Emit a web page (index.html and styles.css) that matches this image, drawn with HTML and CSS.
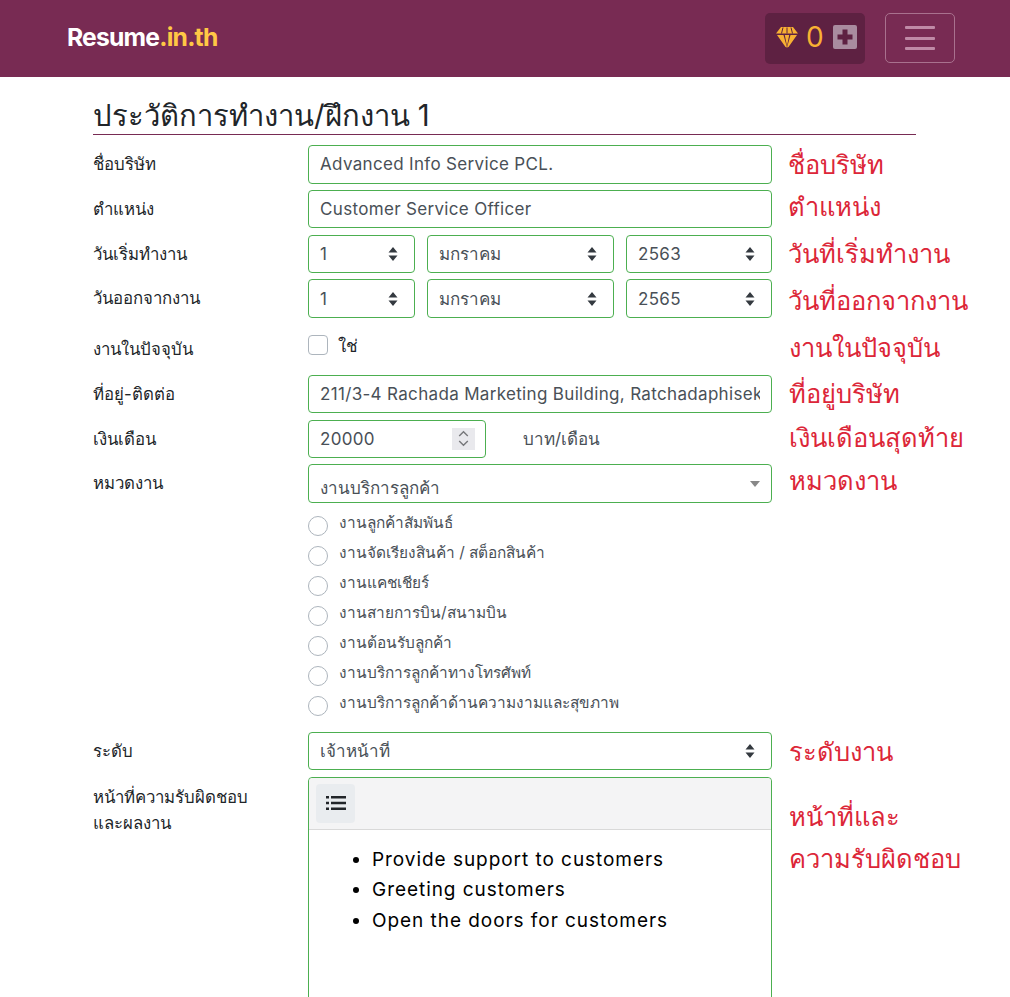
FILE: index.html
```html
<!DOCTYPE html>
<html>
<head>
  <meta name="viewport" content="width=device-width, initial-scale=1">
  <link rel="stylesheet" href="styles.css">
</head>
<body>
  <nav class="navbar">
    <a class="brand">Resume<span class="brand-in">.in.th</span></a>
    <div class="nav-right">
      <div class="coins">
        <svg class="gem" viewBox="0 0 24 22" width="24" height="22">
          <path fill="#f8b133" d="M6 1h12l5 6.500H1z"/>
          <path fill="#f8b133" d="M2 9h6.500L12 21.500 10.500 21zM9.800 9h4.400L12 20zM15.500 9H22L13.500 21 12 21.500z"/>
          <path stroke="#5e2142" stroke-width="1" fill="none" d="M8 1.500 6.500 7.500M16 1.500l1.500 6M12 1.500v6"/>
        </svg>
        <span class="coin-count">0</span>
        <span class="coin-plus">
          <svg viewBox="0 0 24 24" width="24" height="24"><path fill="#5e2142" d="M9.500 4.500h5v5h5v5h-5v5h-5v-5h-5v-5h5z"/></svg>
        </span>
      </div>
      <button class="toggler" type="button">
        <span class="bar"></span><span class="bar"></span><span class="bar"></span>
      </button>
    </div>
  </nav>

  <main class="container">
    <h3 class="section-title">ประวัติการทำงาน/ฝึกงาน 1</h3>

    <div class="row">
      <label class="lbl">ชื่อบริษัท</label>
      <div class="field"><input class="ctl latin" type="text" value="Advanced Info Service PCL."></div>
      <div class="note nudge-3">ชื่อบริษัท</div>
    </div>
    <div class="row">
      <label class="lbl">ตำแหน่ง</label>
      <div class="field"><input class="ctl latin" type="text" value="Customer Service Officer"></div>
      <div class="note nudge-0">ตำแหน่ง</div>
    </div>
    <div class="row">
      <label class="lbl">วันเริ่มทำงาน</label>
      <div class="field dates">
        <select class="ctl sel latin"><option>1</option></select>
        <select class="ctl sel"><option>มกราคม</option></select>
        <select class="ctl sel latin"><option>2563</option></select>
      </div>
      <div class="note nudge-2">วันที่เริ่มทำงาน</div>
    </div>
    <div class="row">
      <label class="lbl">วันออกจากงาน</label>
      <div class="field dates">
        <select class="ctl sel latin"><option>1</option></select>
        <select class="ctl sel"><option>มกราคม</option></select>
        <select class="ctl sel latin"><option>2565</option></select>
      </div>
      <div class="note nudge-5">วันที่ออกจากงาน</div>
    </div>
    <div class="row row-check">
      <label class="lbl">งานในปัจจุบัน</label>
      <div class="field check-line"><input class="check" type="checkbox"><span>ใช่</span></div>
      <div class="note note-in note-raised">งานในปัจจุบัน</div>
    </div>
    <div class="row">
      <label class="lbl">ที่อยู่-ติดต่อ</label>
      <div class="field"><input class="ctl latin" type="text" value="211/3-4 Rachada Marketing Building, Ratchadaphisek Road"></div>
      <div class="note nudge-2 note-in">ที่อยู่บริษัท</div>
    </div>
    <div class="row">
      <label class="lbl">เงินเดือน</label>
      <div class="field salary">
        <div class="ctl num-box latin">
          <input class="num" type="text" value="20000">
          <span class="spin">
            <svg viewBox="0 0 11 17" width="11" height="17"><path fill="none" stroke="#77787b" stroke-width="1.400" d="M1.200 6 5.500 1.800 9.800 6M1.200 11l4.300 4.200L9.800 11"/></svg>
          </span>
        </div>
        <span class="unit">บาท/เดือน</span>
      </div>
      <div class="note nudge-1 note-in">เงินเดือนสุดท้าย</div>
    </div>
    <div class="row">
      <label class="lbl">หมวดงาน</label>
      <div class="field">
        <div class="ctl combo"><span class="combo-text">งานบริการลูกค้า</span><i class="caret"></i></div>
        <ul class="radios">
          <li><span class="radio"></span>งานลูกค้าสัมพันธ์</li>
          <li><span class="radio"></span>งานจัดเรียงสินค้า / สต็อกสินค้า</li>
          <li><span class="radio"></span>งานแคชเชียร์</li>
          <li><span class="radio"></span>งานสายการบิน/สนามบิน</li>
          <li><span class="radio"></span>งานต้อนรับลูกค้า</li>
          <li><span class="radio"></span>งานบริการลูกค้าทางโทรศัพท์</li>
          <li><span class="radio"></span>งานบริการลูกค้าด้านความงามและสุขภาพ</li>
        </ul>
      </div>
      <div class="note nudge-0 note-in">หมวดงาน</div>
    </div>
    <div class="row">
      <label class="lbl">ระดับ</label>
      <div class="field"><select class="ctl sel"><option>เจ้าหน้าที่</option></select></div>
      <div class="note nudge-3 note-in">ระดับงาน</div>
    </div>
    <div class="row row-editor">
      <label class="lbl">หน้าที่ความรับผิดชอบ<br>และผลงาน</label>
      <div class="field">
        <div class="editor">
          <div class="toolbar">
            <span class="tool">
              <svg viewBox="0 0 20 16" width="20" height="16"><path fill="#212529" d="M0 1h3v2.500H0zM5 1h15v2.500H5zM0 6.700h3v2.600H0zM5 6.700h15v2.600H5zM0 12.500h3V15H0zM5 12.500h15V15H5z"/></svg>
            </span>
          </div>
          <ul class="editor-body">
            <li>Provide support to customers</li>
            <li>Greeting customers</li>
            <li>Open the doors for customers</li>
          </ul>
        </div>
      </div>
      <div class="note note-editor note-in">หน้าที่และ<br>ความรับผิดชอบ</div>
    </div>
  </main>
</body>
</html>
```

FILE: styles.css
```css
* { box-sizing: border-box; }

html, body { height: 997px; overflow: hidden; }

body {
  margin: 0;
  font-family: "Inter", "Noto Sans", sans-serif;
  font-size: 17px;
  color: #212529;
  background: #fff;
}

.navbar {
  height: 77px;
  background: #782b53;
  display: flex;
  justify-content: space-between;
  padding: 13px 55px 0 67px;
}

.brand {
  margin-top: 9px;
  font-size: 24.700px;
  line-height: 30px;
  font-weight: 700;
  letter-spacing: -0.8px;
  color: #fff;
}
.brand-in { color: #ffc845; }

.nav-right { display: flex; align-items: flex-start; gap: 20px; }

.coins {
  width: 100px;
  height: 51px;
  background: #5e2142;
  border-radius: 5px;
  display: flex;
  align-items: center;
  padding: 0 0 4px 10px;
}
.gem { flex: none; }
.coin-count {
  margin-left: 7px;
  font-size: 28px;
  color: #f8b133;
  line-height: 1;
}
.coin-plus {
  margin-left: 9px;
  width: 24px;
  height: 24px;
  background: #a98c9f;
  border-radius: 2px;
  display: flex;
}

.toggler {
  width: 70px;
  height: 50px;
  background: transparent;
  border: 1px solid #a9718e;
  border-radius: 5px;
  display: flex;
  flex-direction: column;
  align-items: center;
  justify-content: center;
  gap: 7.500px;
  padding: 0;
}
.bar { width: 30px; height: 3px; background: #bf8aa6; border-radius: 1px; }

.container { padding: 0 0 0 93px; }

.section-title {
  margin: 0 94px 0 0;
  height: 58px;
  padding-top: 20px;
  font-size: 29.200px;
  font-weight: 400;
  line-height: 37px;
  border-bottom: 1px solid #782b53;
}

.row {
  display: grid;
  grid-template-columns: 215px 464px 1fr;
  align-items: start;
  margin-top: 6.300px;
}
.section-title + .row { margin-top: 10.300px; }

.lbl { font-size: 16.800px; line-height: 38px; }

.ctl {
  display: block;
  width: 100%;
  height: 38.400px;
  padding: 0 11px;
  font: inherit;
  color: #495057;
  background: #fff;
  border: 1px solid #4caf50;
  border-radius: 4px;
  outline: none;
}
.latin { letter-spacing: 0.330px; }

.sel {
  appearance: none;
  -webkit-appearance: none;
  background-image: url("data:image/svg+xml,%3Csvg xmlns='http://www.w3.org/2000/svg' viewBox='0 0 10 14'%3E%3Cpath fill='%23343a40' d='M5 0l4.500 5.500h-9zM5 14L.5 8.500h9z'/%3E%3C/svg%3E");
  background-repeat: no-repeat;
  background-position: right 16px center;
  background-size: 10px 14px;
}

.dates { display: grid; grid-template-columns: 107px 187px 146px; gap: 12px; }
.salary { display: flex; align-items: center; }
.num-box { width: 178px; display: flex; align-items: center; padding-right: 10px; }
.num { flex: 1; min-width: 0; border: 0; padding: 0; font: inherit; letter-spacing: inherit; color: #495057; outline: none; }
.spin { flex: none; width: 23px; height: 22px; background: #e9e9ed; display: flex; align-items: center; justify-content: center; }
.unit { margin-left: 37px; color: #495057; }

.row-check { margin-top: 17.700px; margin-bottom: 19.600px; height: 20px; }
.row-check .lbl { line-height: 28px; }
.check-line { display: flex; align-items: center; gap: 10px; height: 20px; }
.check { width: 20px; height: 20px; margin: 0; appearance: none; -webkit-appearance: none; border: 1px solid #adb5bd; border-radius: 4px; background: #fff; }

.note {
  height: 38.400px;
  margin-left: 16px;
  font-size: 25.500px;
  font-weight: 500;
  line-height: 34px;
  color: #dc2638;
  white-space: nowrap;
}
.note-in { margin-left: 17px; }
.note-raised { margin-top: -4px; }
.nudge-0 { padding-top: 0; }
.nudge-1 { padding-top: 1px; }
.nudge-2 { padding-top: 2px; }
.nudge-3 { padding-top: 3px; }
.nudge-5 { padding-top: 5px; }

.combo { display: flex; align-items: center; justify-content: space-between; }
.combo-text { padding-top: 8px; }
.caret { border-style: solid; border-width: 6px 5px 0; border-color: #888 transparent transparent; }

.radios { list-style: none; margin: 11px 0 2px; padding: 0; }
.radios li { display: flex; align-items: flex-start; height: 30px; font-size: 15.400px; line-height: 18px; color: #495057; }
.radio { flex: none; width: 20px; height: 20px; margin: 2px 11px 0 0; border: 1px solid #adb5bd; border-radius: 50%; }

.row-editor .lbl { line-height: 26px; padding-top: 7px; }

.editor { height: 260px; border: 1px solid #4caf50; border-radius: 4px; }
.toolbar {
  height: 52px;
  padding: 6px 7px;
  background: #f4f4f5;
  border-bottom: 1px solid #d9d9d9;
  border-radius: 4px 4px 0 0;
}
.tool {
  width: 39px;
  height: 39px;
  background: #e9ecef;
  border-radius: 4px;
  display: flex;
  align-items: center;
  justify-content: center;
}
.editor-body { margin: 15px 0 0; padding-left: 63px; font-size: 19px; letter-spacing: 0.950px; line-height: 30.500px; color: #000; }

.note-editor { height: auto; padding-top: 19px; line-height: 42px; }
```
